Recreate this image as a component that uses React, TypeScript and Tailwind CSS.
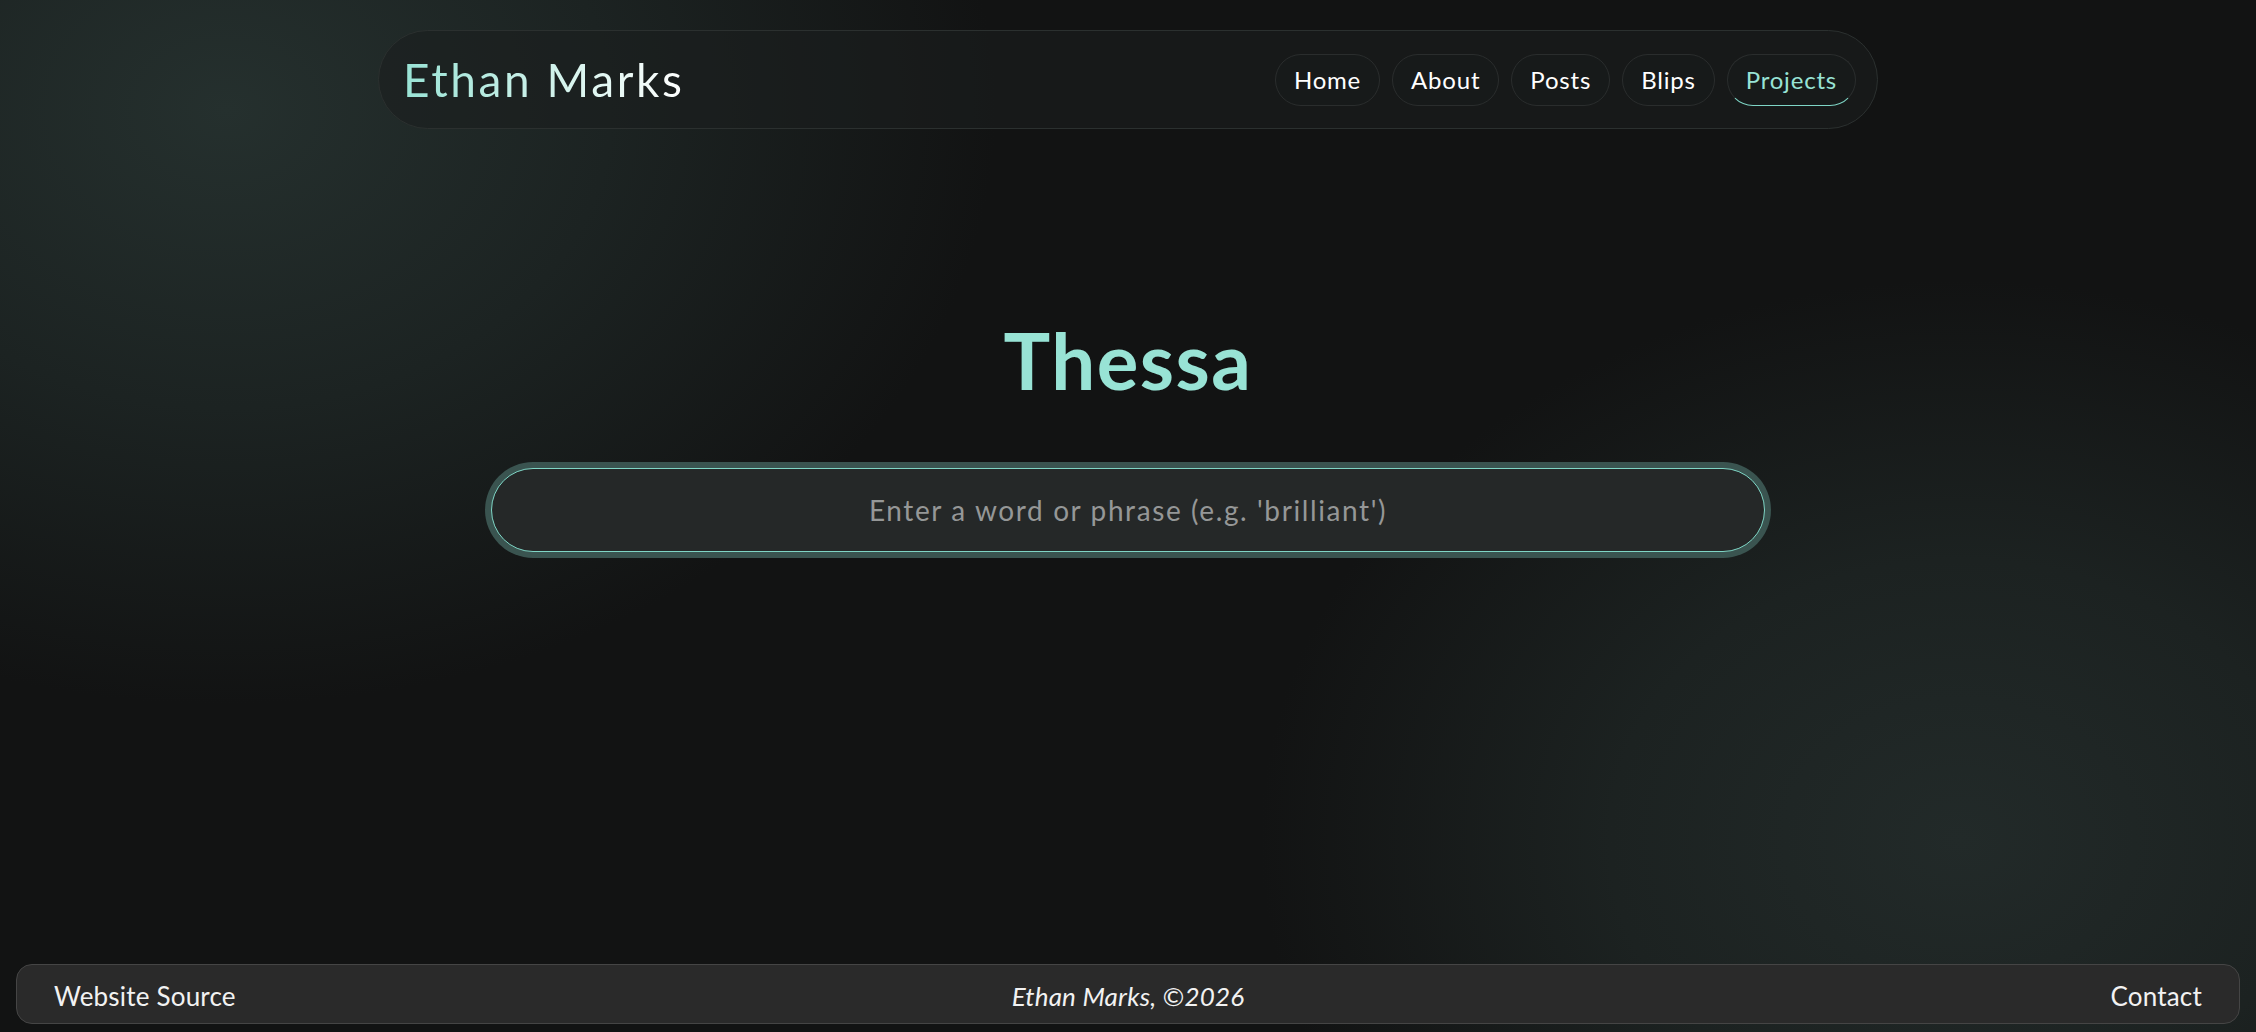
import React from "react";

const navItems = ["Home", "About", "Posts", "Blips", "Projects"];

const App: React.FC = () => {
    return (
        <div className="min-h-screen h-[1032px] flex flex-col bg-[#121313] bg-[radial-gradient(ellipse_1100px_850px_at_226px_110px,#25302e_0%,#1c2322_35%,transparent_70%),radial-gradient(ellipse_1000px_800px_at_1960px_840px,#222a29_0%,#1c2221_35%,transparent_70%)] font-['Lato','Liberation_Sans',sans-serif] text-white">
            {/* Header */}
            <header className="mt-[30px] mx-auto w-[1500px] h-[99px] shrink-0 rounded-full border border-[#2b302f] bg-[#1a1e1e]/60 flex items-center justify-between pl-[24px] pr-[21px]">
                <a href="#" className="text-[46px] leading-none tracking-[2.6px] bg-gradient-to-r from-[#98e3d5] to-white bg-clip-text text-transparent">
                    Ethan Marks
                </a>
                <nav className="flex items-center gap-[12px]">
                    {navItems.map((item) => (
                        <a
                            key={item}
                            href="#"
                            className={
                                item === "Projects"
                                    ? "h-[52px] px-[18px] rounded-full border border-[#2a2d2d] border-b-[#7fd6c6] bg-[#171a1a] flex items-center text-[24px] tracking-[0.8px] text-[#98e3d5]"
                                    : "h-[52px] px-[18px] rounded-full border border-[#2a2d2d] bg-[#171a1a] flex items-center text-[24px] tracking-[0.8px] text-white"
                            }
                        >
                            {item}
                        </a>
                    ))}
                </nav>
            </header>

            {/* Main */}
            <main className="flex-1 flex flex-col items-center">
                <h1 className="mt-[192px] text-[78px] leading-none font-bold tracking-[1.5px] text-[#98e3d5]">Thessa</h1>
                <input
                    type="text"
                    placeholder="Enter a word or phrase (e.g. 'brilliant')"
                    className="mt-[69px] w-[1274px] h-[84px] rounded-full border border-[#7fd6c6] ring-[6px] ring-[#3a5450] bg-[#252828] text-center text-[28px] tracking-[1.6px] text-white placeholder:text-[#959797] outline-none"
                />
            </main>

            {/* Footer */}
            <footer className="mx-[16px] mb-[8px] h-[60px] shrink-0 rounded-[16px] border border-[#454545] bg-[#2a2a2a] grid grid-cols-3 items-center px-[37px] pt-[4px] text-[26px] tracking-[0.2px] text-[#f2f2f2]">
                <a href="#" className="justify-self-start">Website Source</a>
                <span className="justify-self-center italic">Ethan Marks, ©2026</span>
                <a href="#" className="justify-self-end">Contact</a>
            </footer>
        </div>
    );
};

export default App;
